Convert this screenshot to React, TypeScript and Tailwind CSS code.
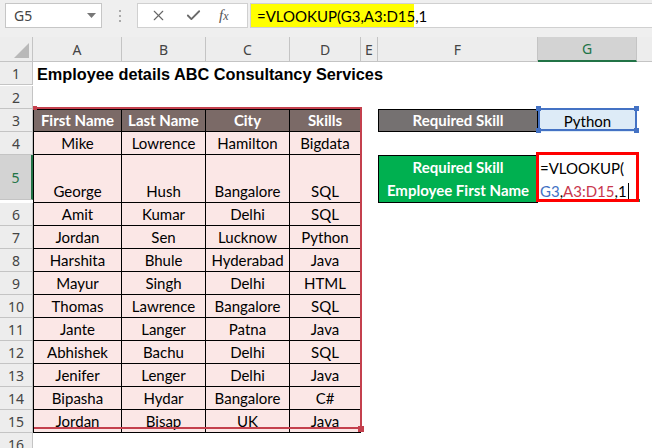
import React from "react";
import { X, Check } from "lucide-react";

const people: string[][] = [
  ["Mike", "Lowrence", "Hamilton", "Bigdata"],
  ["George", "Hush", "Bangalore", "SQL"],
  ["Amit", "Kumar", "Delhi", "SQL"],
  ["Jordan", "Sen", "Lucknow", "Python"],
  ["Harshita", "Bhule", "Hyderabad", "Java"],
  ["Mayur", "Singh", "Delhi", "HTML"],
  ["Thomas", "Lawrence", "Bangalore", "SQL"],
  ["Jante", "Langer", "Patna", "Java"],
  ["Abhishek", "Bachu", "Delhi", "SQL"],
  ["Jenifer", "Lenger", "Delhi", "Java"],
  ["Bipasha", "Hydar", "Bangalore", "C#"],
  ["Jordan", "Bisap", "UK", "Java"],
];

const headers = ["First Name", "Last Name", "City", "Skills"];
const letters = ["A", "B", "C", "D", "E", "F", "G"];

const cellFont = "font-['Lato','Noto_Sans',sans-serif] text-[15px] leading-[20px]";
const hdrFont = "font-['Noto_Sans','Liberation_Sans',sans-serif] text-[14px] text-[#444]";

const FormulaBar: React.FC = () => (
  <div className="flex h-[37px] items-start bg-[#efefef] pt-[3px]">
    <div className="ml-[5px] flex h-[25px] w-[97px] items-center justify-between border border-[#c6c6c6] bg-white pl-[8px] pr-[5px]">
      <span className={hdrFont + " text-[#222]"}>G5</span>
      <svg width="9" height="5" viewBox="0 0 9 5">
        <polygon points="0,0 9,0 4.5,5" fill="#777" />
      </svg>
    </div>
    <div className="flex w-[35px] flex-col items-center gap-[3px] pt-[7px]">
      <span className="h-[2px] w-[2px] bg-[#aaa]" />
      <span className="h-[2px] w-[2px] bg-[#aaa]" />
      <span className="h-[2px] w-[2px] bg-[#aaa]" />
    </div>
    <div className="flex h-[25px] w-[111px] items-center border border-[#d0d0d0] bg-white">
      <X size={17} strokeWidth={1.6} className="ml-[12px] text-[#666]" />
      <Check size={17} strokeWidth={2.6} className="ml-[18px] text-[#6a6a6a]" />
      <span className="ml-[17px] font-['Liberation_Serif',serif] text-[15px] italic text-[#555]">
        f<span className="text-[12px]">x</span>
      </span>
    </div>
    <div className="ml-[2px] flex h-[25px] flex-1 items-center border-y border-l border-[#d0d0d0] bg-white">
      <div className={"flex h-full w-[163px] items-center bg-[#ffff00] pl-[6px] text-black " + cellFont}>
        =VLOOKUP(G3,A3:D15,1
      </div>
    </div>
  </div>
);

const Sheet: React.FC = () => {
  const rows = Array.from({ length: 16 }, (_, i) => i + 1);
  return (
    <div className="relative grid grid-cols-[33px_89px_84px_84px_71px_17px_160px_99px_15px] bg-white">
      {/* column headers */}
      <div className="relative h-[25px] border-r border-b border-[#c4c4c4] bg-[#ededed]">
        <svg className="absolute right-[3px] bottom-[3px]" width="15" height="15" viewBox="0 0 15 15">
          <polygon points="15,0 15,15 0,15" fill="#b9b9b9" />
        </svg>
      </div>
      {letters.map((l) =>
        l === "G" ? (
          <div
            key={l}
            className={"flex items-center justify-center border-r border-b-2 border-r-[#c4c4c4] border-b-[#217346] bg-[#d3d3d3] " + hdrFont + " text-[#217346]"}
          >
            {l}
          </div>
        ) : (
          <div
            key={l}
            className={"flex items-center justify-center border-r border-b border-[#c4c4c4] bg-[#ededed] " + hdrFont}
          >
            {l}
          </div>
        )
      )}
      <div className="border-b border-[#c4c4c4] bg-[#ededed]" />

      {rows.map((r) => {
        const tall = r === 5;
        const inTable = r >= 3 && r <= 15;
        return (
          <React.Fragment key={r}>
            <div
              className={
                "flex items-center justify-center border-b border-[#c4c4c4] " +
                hdrFont +
                (tall
                  ? " h-[45px] border-r-2 border-r-[#217346] bg-[#d3d3d3] text-[#217346]"
                  : " h-[23px] border-r border-r-[#c4c4c4] bg-[#ededed]")
              }
            >
              {r}
            </div>

            {r === 1 ? (
              <>
                <div className="relative z-10 flex items-center pl-[4px]">
                  <span className="whitespace-nowrap font-['Liberation_Sans',Arial,sans-serif] text-[16.3px] font-bold text-black">
                    Employee details ABC Consultancy Services
                  </span>
                </div>
                <div />
                <div />
                <div />
              </>
            ) : inTable ? (
              (r === 3 ? headers : people[r - 4]).map((v, c) => (
                <div
                  key={c}
                  className={
                    "flex items-end justify-center border-r border-b border-black pb-[1px] " +
                    cellFont +
                    (r === 3 ? " border-t bg-[#7b6a67] font-bold text-white" : " bg-[#fbe7e6] text-black") +
                    (c === 0 ? " border-l" : "")
                  }
                >
                  {v}
                </div>
              ))
            ) : (
              <>
                <div />
                <div />
                <div />
                <div />
              </>
            )}

            <div />

            {r === 3 ? (
              <div className={"flex items-end justify-center border border-black bg-[#757171] pb-[1px] font-bold text-white " + cellFont}>
                Required Skill
              </div>
            ) : r === 5 ? (
              <div className={"flex flex-col items-center justify-end border border-black bg-[#00b050] font-bold text-white " + cellFont + " leading-[23px]"}>
                <span>Required Skill</span>
                <span>Employee First Name</span>
              </div>
            ) : (
              <div />
            )}

            {r === 3 ? (
              <div className={"flex items-end justify-center bg-[#ddebf7] pb-[1px] text-black " + cellFont}>Python</div>
            ) : r === 5 ? (
              <div className={"relative z-10 flex flex-col justify-end whitespace-nowrap pl-[2px] text-black " + cellFont + " leading-[23px]"}>
                <span>=VLOOKUP(</span>
                <span className="flex items-center">
                  <span className="text-[#4472c4]">G3</span>,<span className="text-[#c8374d]">A3:D15</span>,1
                  <span className="ml-[1px] inline-block h-[18px] w-[1px] bg-black" />
                </span>
              </div>
            ) : (
              <div />
            )}
            <div />
          </React.Fragment>
        );
      })}

      {/* range reference A3:D15 */}
      <div className="pointer-events-none absolute left-[34px] top-[70px] h-[322px] w-[328px] border-t-2 border-r-2 border-b-2 border-[#c4404d]" />
      <div className="absolute left-[33px] top-[69px] h-[4px] w-[4px] bg-[#c4404d]" />
      <div className="absolute left-[358px] top-[389px] h-[6px] w-[6px] bg-[#c4404d]" />

      {/* range reference G3 */}
      <div className="pointer-events-none absolute left-[538px] top-[71px] h-[23px] w-[99px] border-2 border-[#4472c4]" />
      <div className="absolute left-[536px] top-[69px] h-[5px] w-[5px] bg-[#4472c4]" />
      <div className="absolute left-[634px] top-[69px] h-[5px] w-[5px] bg-[#4472c4]" />
      <div className="absolute left-[536px] top-[91px] h-[5px] w-[5px] bg-[#4472c4]" />
      <div className="absolute left-[634px] top-[91px] h-[5px] w-[5px] bg-[#4472c4]" />

      {/* highlighted edit cell G5 */}
      <div className="pointer-events-none absolute left-[536px] top-[115px] z-20 h-[50px] w-[103px] border-[3px] border-[#ff0000]" />
      <div className="absolute left-[637px] top-[162px] h-[3px] w-[3px] bg-[#217346]" />
    </div>
  );
};

export default function App() {
  return (
    <div className="h-[448px] w-[652px] overflow-hidden bg-white">
      <FormulaBar />
      <Sheet />
    </div>
  );
}
